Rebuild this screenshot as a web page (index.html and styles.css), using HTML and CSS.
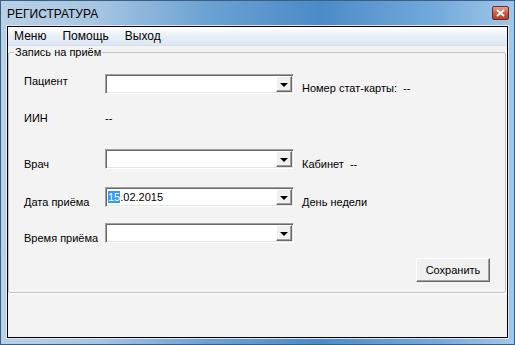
FILE: index.html
```html
<!DOCTYPE html>
<html lang="ru">
<head>
    <meta charset="UTF-8">
    <title>РЕГИСТРАТУРА</title>
    <link rel="stylesheet" href="styles.css">
</head>
<body>
    <div class="window">
        <div class="titlebar">
            <span class="title">РЕГИСТРАТУРА</span>
            <span class="close-btn">
                <svg width="9" height="8" viewBox="0 0 9 8"><path d="M1 1 L8 7 M8 1 L1 7" stroke="#fff" stroke-width="2"/></svg>
            </span>
        </div>
        <div class="client">
            <div class="menubar">
                <span class="menu-item">Меню</span>
                <span class="menu-item">Помощь</span>
                <span class="menu-item">Выход</span>
            </div>
            <fieldset class="group">
                <legend>Запись на приём</legend>

                <div class="row row-patient">
                    <span class="lbl lbl-up">Пациент</span>
                    <div class="combo"><span class="combo-text"></span><span class="drop"></span></div>
                    <span class="info info-down">Номер стат-карты:&nbsp; --</span>
                </div>

                <div class="row row-iin">
                    <span class="lbl">ИИН</span>
                    <span class="value">--</span>
                </div>

                <div class="row row-doctor">
                    <span class="lbl lbl-low">Врач</span>
                    <div class="combo"><span class="combo-text"></span><span class="drop"></span></div>
                    <span class="info info-low">Кабинет&nbsp; --</span>
                </div>

                <div class="row row-date">
                    <span class="lbl lbl-low">Дата приёма</span>
                    <div class="combo"><span class="combo-text"><span class="sel">15</span>.02.2015</span><span class="drop"></span></div>
                    <span class="info info-low">День недели</span>
                </div>

                <div class="row row-time">
                    <span class="lbl lbl-low">Время приёма</span>
                    <div class="combo"><span class="combo-text"></span><span class="drop"></span></div>
                </div>

                <div class="actions">
                    <button class="btn">Сохранить</button>
                </div>
            </fieldset>
        </div>
    </div>
</body>
</html>
```

FILE: styles.css
```css
body {
    margin: 0;
    padding: 0;
    font-family: "Liberation Sans", Arial, sans-serif;
    font-size: 11px;
    color: #000;
}
.window {
    width: 515px;
    height: 345px;
    box-sizing: border-box;
    display: flex;
    flex-direction: column;
    border: 1px solid #3a5f86;
    background: linear-gradient(to right, #b9d0e6 0%, #a8c6e2 18%, #6ca2d3 40%, #4b8bc7 62%, #73aadb 85%, #a3c7e7 100%);
}
.titlebar {
    height: 25px;
    display: flex;
    align-items: center;
    padding: 0 5px 0 6px;
}
.title {
    font-size: 12px;
    flex: 1;
}
.close-btn {
    width: 15px;
    height: 12px;
    margin-top: -1px;
    border: 1px solid #6b2b22;
    border-radius: 2px;
    background: linear-gradient(#e6a291, #cc5a45 50%, #b9402c);
    display: flex;
    align-items: center;
    justify-content: center;
}
.client {
    flex: 1;
    margin: 0 6px 6px 6px;
    border: 1px solid #000;
    box-shadow: 0 0 0 1px #dbe8f4;
    background: #f3f3f3;
    display: flex;
    flex-direction: column;
}
.menubar {
    height: 18px;
    display: flex;
    align-items: center;
    background: linear-gradient(#ffffff, #e9eff7 50%, #dce7f4);
    border-bottom: 1px solid #d8e2ee;
}
.menu-item {
    font-size: 12px;
    padding: 0 10px 0 6px;
}
.group {
    margin: 0 1px 0 0;
    padding: 0 0 10px 0;
    border: 1px solid #c3c3c3;
    border-radius: 2px;
    box-shadow: 1px 1px 0 #fff;
}
.group legend {
    margin-left: 5px;
    padding: 0 1px;
    line-height: 13px;
}
.row {
    display: flex;
    align-items: flex-start;
    height: 20px;
    padding-left: 15px;
}
.lbl {
    width: 81px;
    line-height: 13px;
    padding-top: 4px;
}
.lbl-up {
    padding-top: 1px;
}
.lbl-low {
    padding-top: 9px;
}
.info {
    margin-left: 8px;
    line-height: 13px;
}
.info-down {
    padding-top: 8px;
}
.info-low {
    padding-top: 9px;
}
.row-patient {
    margin-top: 15px;
}
.row-iin {
    height: 13px;
    margin-top: 18px;
}
.row-iin .lbl {
    padding-top: 0;
}
.value {
    line-height: 13px;
}
.row-doctor {
    margin-top: 24px;
}
.row-date {
    margin-top: 18px;
}
.row-time {
    margin-top: 16px;
}
.combo {
    width: 189px;
    height: 20px;
    box-sizing: border-box;
    display: flex;
    align-items: center;
    background: #fff;
    border: 1px solid;
    border-color: #a0a0a0 #ffffff #ffffff #a0a0a0;
    box-shadow: inset 1px 1px 0 #696969, inset -1px -1px 0 #e3e3e3;
    padding: 1px 1px 1px 2px;
}
.combo-text {
    flex: 1;
    line-height: 14px;
}
.sel {
    background: #3399ff;
    color: #fff;
}
.drop {
    width: 16px;
    height: 16px;
    box-sizing: border-box;
    background: #f0f0f0;
    border: 1px solid;
    border-color: #ffffff #696969 #696969 #ffffff;
    box-shadow: inset -1px -1px 0 #a0a0a0;
    display: flex;
    align-items: center;
    justify-content: center;
}
.drop::after {
    content: "";
    width: 0;
    height: 0;
    border-left: 4px solid transparent;
    border-right: 4px solid transparent;
    border-top: 4px solid #000;
    margin-top: 1px;
}
.actions {
    display: flex;
    justify-content: flex-end;
    margin-top: 15px;
    padding-right: 15px;
}
.btn {
    width: 74px;
    height: 24px;
    font-family: "Liberation Sans", Arial, sans-serif;
    font-size: 11px;
    background: #f0f0f0;
    border: 1px solid;
    border-color: #ffffff #696969 #696969 #ffffff;
    box-shadow: inset -1px -1px 0 #a0a0a0;
    padding: 0;
    color: #000;
}
```
